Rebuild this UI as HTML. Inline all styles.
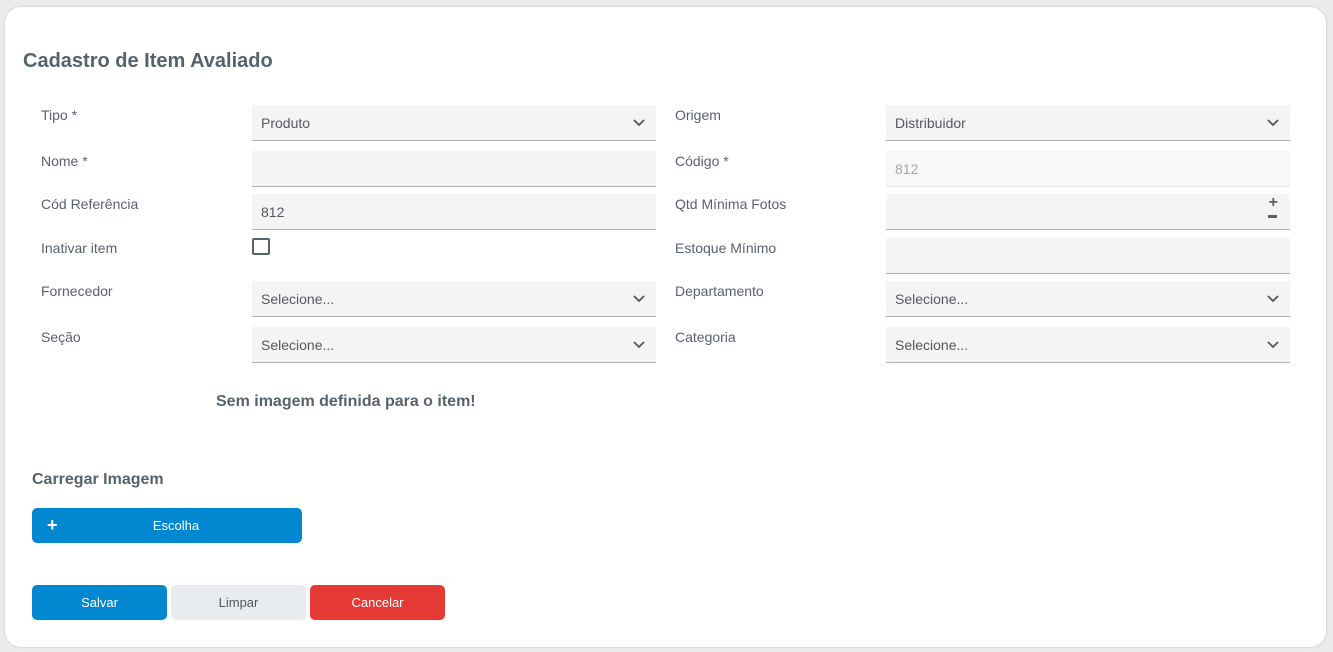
<!DOCTYPE html>
<html><head><meta charset="utf-8"><style>
*{box-sizing:border-box;margin:0;padding:0}
body{width:1333px;height:652px;background:#ebebeb;font-family:"Liberation Sans",sans-serif;position:relative;overflow:hidden}
.card{position:absolute;left:5px;top:7px;width:1321px;height:640px;background:#fff;border-radius:16px;box-shadow:0 0 2px rgba(0,0,0,.2)}
.a{position:absolute}
h1{position:absolute;left:23px;top:50px;font-size:20px;font-weight:bold;color:#56636b;letter-spacing:0}
.lb{position:absolute;font-size:14px;color:#56636b}
.in{position:absolute;width:404px;height:36px;background:#f4f4f4;border-bottom:1px solid #a8b4ba;font-size:14px;color:#4f5a60;padding:10px 0 0 9px}
.ch{position:absolute;right:10px;top:12px;width:14px;height:10px}
.btn{position:absolute;height:35px;border-radius:5px;font-size:13px;text-align:center;line-height:35px}
</style></head><body>
<div class="card"></div>
<h1>Cadastro de Item Avaliado</h1>

<div class="lb" style="left:41px;top:107px">Tipo *</div>
<div class="in" style="left:252px;top:105px">Produto<svg class="ch" viewBox="0 0 14 10"><path d="M2 3l5 5 5-5" fill="none" stroke="#4f5a60" stroke-width="1.8"/></svg></div>
<div class="lb" style="left:41px;top:153px">Nome *</div>
<div class="in" style="left:252px;top:151px"></div>
<div class="lb" style="left:41px;top:196px">Cód Referência</div>
<div class="in" style="left:252px;top:194px">812</div>
<div class="lb" style="left:41px;top:240px">Inativar item</div>
<div class="a" style="left:252px;top:238px;width:18px;height:17px;border:2px solid #56636b;border-radius:2px"></div>
<div class="lb" style="left:41px;top:283px">Fornecedor</div>
<div class="in" style="left:252px;top:281px">Selecione...<svg class="ch" viewBox="0 0 14 10"><path d="M2 3l5 5 5-5" fill="none" stroke="#4f5a60" stroke-width="1.8"/></svg></div>
<div class="lb" style="left:41px;top:329px">Seção</div>
<div class="in" style="left:252px;top:327px">Selecione...<svg class="ch" viewBox="0 0 14 10"><path d="M2 3l5 5 5-5" fill="none" stroke="#4f5a60" stroke-width="1.8"/></svg></div>

<div class="lb" style="left:675px;top:107px">Origem</div>
<div class="in" style="left:886px;top:105px">Distribuidor<svg class="ch" viewBox="0 0 14 10"><path d="M2 3l5 5 5-5" fill="none" stroke="#4f5a60" stroke-width="1.8"/></svg></div>
<div class="lb" style="left:675px;top:153px">Código *</div>
<div class="in" style="left:886px;top:151px;background:#f8f8f8;border-bottom-color:#e0e4e6;color:#a0a8ac">812</div>
<div class="lb" style="left:675px;top:196px">Qtd Mínima Fotos</div>
<div class="in" style="left:886px;top:194px"><div class="a" style="right:12px;top:3px;font-size:16px;font-weight:bold;color:#56636b;line-height:12px">+</div><div class="a" style="right:13px;top:21px;width:9px;height:3px;background:#56636b"></div></div>
<div class="lb" style="left:675px;top:240px">Estoque Mínimo</div>
<div class="in" style="left:886px;top:238px"></div>
<div class="lb" style="left:675px;top:283px">Departamento</div>
<div class="in" style="left:886px;top:281px">Selecione...<svg class="ch" viewBox="0 0 14 10"><path d="M2 3l5 5 5-5" fill="none" stroke="#4f5a60" stroke-width="1.8"/></svg></div>
<div class="lb" style="left:675px;top:329px">Categoria</div>
<div class="in" style="left:886px;top:327px">Selecione...<svg class="ch" viewBox="0 0 14 10"><path d="M2 3l5 5 5-5" fill="none" stroke="#4f5a60" stroke-width="1.8"/></svg></div>

<div class="a" style="left:216px;top:393px;font-size:16px;font-weight:bold;color:#56636b">Sem imagem definida para o item!</div>
<div class="a" style="left:32px;top:471px;font-size:16px;font-weight:bold;color:#56636b">Carregar Imagem</div>
<div class="btn" style="left:32px;top:508px;width:270px;background:#0288d1;color:#fff;padding-left:18px"><span class="a" style="left:15px;top:0;font-size:18px;font-weight:bold">+</span>Escolha</div>
<div class="btn" style="left:32px;top:585px;width:135px;background:#0288d1;color:#fff">Salvar</div>
<div class="btn" style="left:171px;top:585px;width:135px;background:#e9ecef;color:#4f5a60">Limpar</div>
<div class="btn" style="left:310px;top:585px;width:135px;background:#e53935;color:#fff">Cancelar</div>
</body></html>
